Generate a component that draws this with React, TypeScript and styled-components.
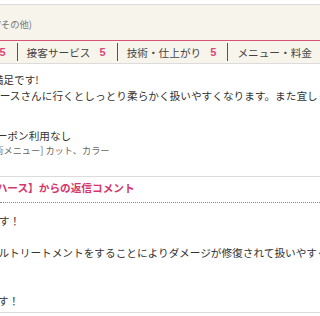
import styled, { createGlobalStyle } from 'styled-components';

const GlobalStyle = createGlobalStyle`
    html, body {
        margin: 0;
        padding: 0;
        background: #ffffff;
        overflow: hidden;
    }
    body {
        font-family: "Noto Sans CJK JP", "Noto Sans", sans-serif;
        color: #333333;
    }
`;

const Review = styled.div`
    width: 320px;
    margin-top: 4px;
    border-top: 1px solid #dcdcdc;
    overflow: hidden;
`;

const ReviewHead = styled.div`
    background: #f7f4ec;
    padding: 12px 0 9px;
    border-bottom: 1px solid #d6537a;
`;

const Line = styled.div<{ $indent: number; $size?: number; $color?: string; $height?: number; $bold?: boolean }>`
    white-space: nowrap;
    text-indent: ${(p) => p.$indent}px;
    font-size: ${(p) => p.$size ?? 10.67}px;
    line-height: ${(p) => p.$height ?? 16}px;
    color: ${(p) => p.$color ?? '#333333'};
    font-weight: ${(p) => (p.$bold ? 700 : 400)};
`;

const RatingsBg = styled.div`
    background: #f7f4ec;
    border-bottom: 1px solid #dcdcdc;
`;

const Ratings = styled.div`
    display: flex;
    align-items: center;
    height: 22px;
    margin-left: -99px;
    white-space: nowrap;
`;

const RatingItem = styled.div<{ $first?: boolean }>`
    display: flex;
    align-items: center;
    height: 18px;
    padding: 0 11px 0 ${(p) => (p.$first ? 0 : 9)}px;
    border-left: ${(p) => (p.$first ? 'none' : '1px solid #555555')};
    font-size: 10.67px;
    color: #444444;
    flex-shrink: 0;
`;

const Score = styled.span`
    margin-left: 9px;
    font-family: "Liberation Sans", Arial, sans-serif;
    font-size: 11px;
    font-weight: 700;
    color: #e0457b;
`;

const Body = styled.div`
    padding: 8px 0 20px;
    border-bottom: 1px solid #dcdcdc;
`;

const Coupon = styled.div`
    margin-top: 24px;
`;

const Reply = styled.div`
    padding-top: 3px;
`;

const ReplyTitle = styled.div`
    padding-bottom: 6px;
    border-bottom: 1px dotted #8a8a8a;
`;

const ReplyBody = styled.div`
    padding: 10px 0 3px;
    border-bottom: 1px solid #dcdcdc;
`;

const ratings = [
    { label: '総合', score: 5 },
    { label: '雰囲気', score: 5 },
    { label: '接客サービス', score: 5 },
    { label: '技術・仕上がり', score: 5 },
    { label: 'メニュー・料金', score: 5 },
];

const App = () => {
    return (
        <>
            <GlobalStyle />
            <Review>
                <ReviewHead>
                    <Line $indent={-48} $size={9.33} $height={14} $color="#777777">
                        (女性/30代/その他)
                    </Line>
                </ReviewHead>
                <RatingsBg>
                    <Ratings>
                        {ratings.map((r, i) => (
                            <RatingItem key={r.label} $first={i === 0}>
                                {r.label}
                                <Score>{r.score}</Score>
                            </RatingItem>
                        ))}
                    </Ratings>
                </RatingsBg>
                <Body>
                    <Line $indent={-18}>大満足です!</Line>
                    <Line $indent={-11}>
                        ハースさんに行くとしっとり柔らかく扱いやすくなります。また宜しくお願いします。
                    </Line>
                    <Coupon>
                        <Line $indent={-14}>クーポン利用なし</Line>
                        <Line $indent={-18} $size={9.2} $height={12} $color="#666666">
                            [施術メニュー] カット、カラー
                        </Line>
                    </Coupon>
                </Body>
                <Reply>
                    <ReplyTitle>
                        <Line $indent={-14} $bold $color="#d6376b">
                            【ハース】からの返信コメント
                        </Line>
                    </ReplyTitle>
                    <ReplyBody>
                        <Line $indent={-129}>いつもありがとうございます！</Line>
                        <Line $indent={0}>&nbsp;</Line>
                        <Line $indent={-97.5}>
                            カラーと一緒にオイルトリートメントをすることによりダメージが修復されて扱いやすくなります。
                        </Line>
                        <Line $indent={0}>&nbsp;</Line>
                        <Line $indent={0}>&nbsp;</Line>
                        <Line $indent={-193}>またのご来店を心よりお待ちしております！</Line>
                    </ReplyBody>
                </Reply>
            </Review>
        </>
    );
};

export default App;
